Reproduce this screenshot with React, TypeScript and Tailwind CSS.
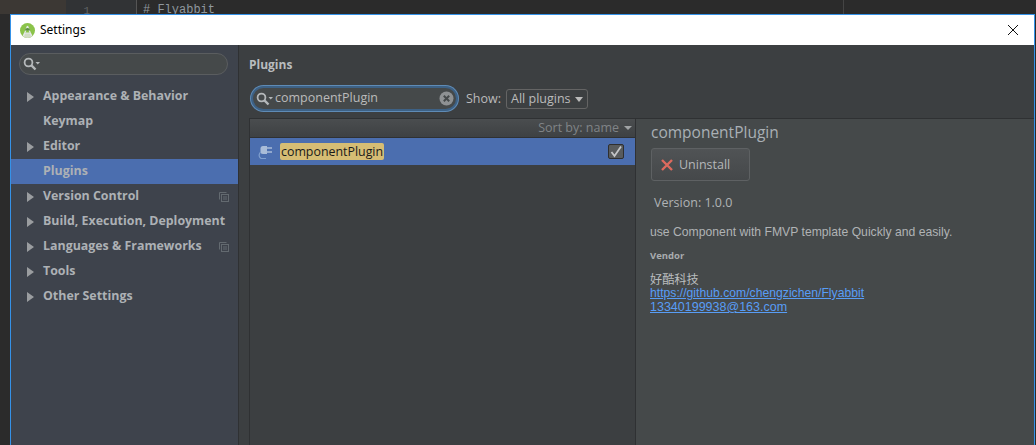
const ui = "font-['Open_Sans','Noto_Sans',sans-serif]";

const navItems = [
  { label: "Appearance & Behavior", arrow: true },
  { label: "Keymap", arrow: false },
  { label: "Editor", arrow: true },
  { label: "Plugins", arrow: false, active: true },
  { label: "Version Control", arrow: true, copy: true },
  { label: "Build, Execution, Deployment", arrow: true },
  { label: "Languages & Frameworks", arrow: true, copy: true },
  { label: "Tools", arrow: true },
  { label: "Other Settings", arrow: true },
];

const SearchIcon = () => (
  <svg width="18" height="14" viewBox="0 0 18 14" className="shrink-0">
    <circle cx="5.5" cy="5.5" r="3.9" fill="none" stroke="#b4b8ba" strokeWidth="1.8" />
    <path d="M8.2 8.2 L12.5 12.5" stroke="#b4b8ba" strokeWidth="2.4" />
    <path d="M12.5 5 H17 L14.75 7.5 Z" fill="#b4b8ba" />
  </svg>
);

const AndroidLogo = () => (
  <svg width="15" height="15" viewBox="0 0 15 15" className="shrink-0">
    <circle cx="7.5" cy="7.5" r="7.5" fill="#8bc34a" />
    <path d="M2.5 13 A7.5 7.5 0 0 0 12.5 13 L11 10 H4 Z" fill="#d3dcc6" />
    <path d="M7.5 3 L3.5 13 M7.5 3 L11.5 13" stroke="#e6e9ec" strokeWidth="1.2" fill="none" />
    <path d="M5 7.5 A2.5 2.5 0 0 1 10 7.5 Z" fill="#5f8f45" />
    <path d="M5 10 H10" stroke="#e6e9ec" strokeWidth="1" />
  </svg>
);

const CopyIcon = () => (
  <svg width="10" height="10" viewBox="0 0 10 10" className="shrink-0">
    <path d="M0.5 7.5 V0.5 H7.5" fill="none" stroke="#636a70" />
    <rect x="2.5" y="2.5" width="7" height="7" fill="none" stroke="#636a70" />
    <path d="M4 5 H8 M4 7 H8" stroke="#636a70" />
  </svg>
);

const PlugIcon = () => (
  <svg width="16" height="16" viewBox="0 0 16 16" className="shrink-0">
    <path d="M6 2 H10 V10 H6 Q3.5 10 3.5 7.5 V4.5 Q3.5 2 6 2 Z" fill="#a9bcd8" />
    <path d="M10 4 H15 M10 8 H15" stroke="#a9bcd8" strokeWidth="1.5" />
    <path d="M3.5 8 Q0.5 12 4 14.5 H9" stroke="#7f9fce" strokeWidth="1.2" fill="none" />
  </svg>
);

export default function App() {
  return (
    <div className={`h-[445px] w-[1036px] overflow-hidden bg-[#2b2b2b] ${ui}`}>
      {/* editor showing behind the dialog */}
      <div className="flex h-[14px] overflow-hidden">
        <div className="w-[66px] bg-[#3c3834]" />
        <div className="w-[70px] bg-[#313335] pt-[5px] pr-[46px] text-right font-['Liberation_Mono',monospace] text-[11px] leading-3 text-[#606366]">
          1
        </div>
        <div className="w-px bg-[#555555]" />
        <div className="w-[706px] bg-[#2b2b2b] pl-[6px] pt-[4px] font-['Liberation_Mono',monospace] text-[12px] leading-3 text-[#8f979e]">
          # Flyabbit
        </div>
        <div className="w-px bg-[#444444]" />
      </div>

      <div className="ml-[10px] flex h-[431px] w-[1025px] flex-col border-x border-t border-[#3592e8]">
        <div className="flex h-[30px] shrink-0 items-center bg-white pl-[9px] pr-[15px] text-black">
          <AndroidLogo />
          <span className="ml-[5px] font-['Noto_Sans',sans-serif] text-[12px]">Settings</span>
          <svg width="12" height="12" viewBox="0 0 12 12" className="ml-auto">
            <path d="M1 1 L11 11 M11 1 L1 11" stroke="#111111" strokeWidth="1" />
          </svg>
        </div>

        <div className="flex min-h-0 flex-1">
          <div className="w-[227px] shrink-0 bg-[#3e434c] pt-[8px]">
            <div className="ml-[8px] mr-[10px] mb-[9px] flex h-[22px] items-center rounded-full border border-[#5a5d5f] bg-[#45494a] pl-[3px]">
              <SearchIcon />
            </div>
            {navItems.map((item) => (
              <div
                key={item.label}
                className={`flex h-[25px] items-center pl-[16px] pr-[9px] ${item.active ? "bg-[#4b6eaf]" : ""}`}
              >
                <div className="w-[16px] shrink-0">
                  {item.arrow && <div className="h-0 w-0 border-y-[5px] border-l-[7px] border-y-transparent border-l-[#9a9da0]" />}
                </div>
                <span className="text-[12.4px] font-bold text-[#adb1b5]">{item.label}</span>
                {item.copy && <div className="ml-auto"><CopyIcon /></div>}
              </div>
            ))}
          </div>
          <div className="w-px shrink-0 bg-[#2f3133]" />

          <div className="flex min-w-0 flex-1 flex-col bg-[#3c3f41] pl-[10px] text-[#bbbbbb]">
            <div className="pt-[11px] text-[12px] font-bold leading-[18px] text-[#b9bcbe]">Plugins</div>
            <div className="ml-[2px] mt-[12px] flex items-center">
              <div className="flex h-[25px] w-[207px] items-center rounded-full border-2 border-[#3d6185] bg-[#45494a] pl-[3px] pr-[2px] ring-1 ring-[#5f8bb5]">
                <SearchIcon />
                <span className="ml-[1px] text-[12.5px] text-[#bbbbbb]">componentPlugin</span>
                <svg width="15" height="15" viewBox="0 0 15 15" className="ml-auto">
                  <circle cx="7.5" cy="7.5" r="7" fill="#8e9193" />
                  <path d="M4.8 4.8 L10.2 10.2 M10.2 4.8 L4.8 10.2" stroke="#45494a" strokeWidth="2" />
                </svg>
              </div>
              <span className="ml-[8px] pt-[1px] text-[12.5px]">Show:</span>
              <div className="ml-[5px] mt-[1px] flex h-[20px] w-[82px] items-center rounded-[3px] border border-[#646464] pl-[4px] text-[12.5px]">
                All plugins
                <div className="ml-[4px] h-0 w-0 border-x-[4.5px] border-t-[5px] border-x-transparent border-t-[#bbbbbb]" />
              </div>
            </div>

            <div className="mt-[7px] flex min-h-0 flex-1">
              <div className="w-[387px] shrink-0 border-x border-[#2f3133]">
                <div className="flex h-[20px] items-center justify-end border-y border-[#2f3133] bg-gradient-to-b from-[#4a4d4f] to-[#3e4143] pr-[3px] text-[12.5px] text-[#808487]">
                  Sort by: name
                  <div className="ml-[5px] h-0 w-0 border-x-[4px] border-t-[4px] border-x-transparent border-t-[#a0a3a5]" />
                </div>
                <div className="flex h-[27px] items-center bg-[#4b6eaf] pl-[7px] pr-[11px]">
                  <PlugIcon />
                  <span className="ml-[7px] rounded-[2px] bg-[#d6bd74] px-[1px] text-[12.4px] leading-[17px] text-[#1a1a1a]">componentPlugin</span>
                  <div className="ml-auto flex h-[15px] w-[16px] items-center justify-center rounded-[2px] border border-[#2f2f2f] bg-[#585b5d]">
                    <svg width="14" height="14" viewBox="0 0 14 14">
                      <path d="M2.5 7 L5.5 11 L12 1.5" fill="none" stroke="#c4c6c8" strokeWidth="1.8" />
                    </svg>
                  </div>
                </div>
              </div>

              <div className="min-w-0 flex-1 border-t border-[#2f3133] bg-[#45494a] pl-[15px] pt-[2px]">
                <div className="text-[15.5px] leading-[22px] text-[#a9b0b5]">componentPlugin</div>
                <div className="mt-[5px] flex h-[33px] w-[99px] items-center rounded-[3px] border border-[#5e6163] bg-gradient-to-b from-[#505355] to-[#45484a] pl-[9px] pt-[1px] text-[12.5px] text-[#b4b7b9]">
                  <svg width="12" height="12" viewBox="0 0 12 12" className="shrink-0">
                    <path d="M1 1 L11 11 M11 1 L1 11" stroke="#dd6a5e" strokeWidth="2.4" />
                  </svg>
                  <span className="ml-[6px]">Uninstall</span>
                </div>
                <div className="mt-[13px] pl-[3px] text-[12.5px] leading-[18px] text-[#b0b3b5]">Version: 1.0.0</div>
                <div className="mt-[13px] -ml-[1px] font-['Liberation_Sans',sans-serif] text-[12.2px] leading-[14px] text-[#b0b3b5]">
                  use Component with FMVP template Quickly and easily.
                </div>
                <div className="mt-[10px] -ml-[1px] text-[9.5px] font-bold leading-[14px] text-[#a9acae]">Vendor</div>
                <div className="mt-[10px] -ml-[1px] font-['Liberation_Sans','Noto_Sans_CJK_SC',sans-serif] text-[12.2px] leading-[14px] text-[#b9bcbe]">
                  <div className="h-[13px]">好酷科技</div>
                  <div className="h-[14px] text-[#589df6] underline">https://github.com/chengzichen/Flyabbit</div>
                  <div className="h-[14px] text-[12.5px] text-[#589df6] underline">13340199938@163.com</div>
                </div>
              </div>
            </div>
          </div>
        </div>
      </div>
    </div>
  );
}
